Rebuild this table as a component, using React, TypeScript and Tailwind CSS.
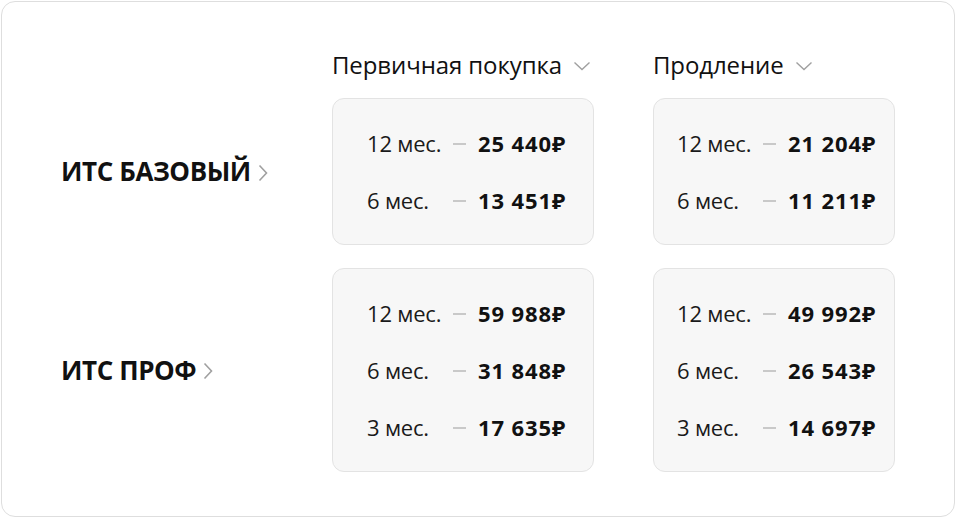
import React from "react";

const Dash = () => <div className="h-[2px] w-[13px] bg-[#c9c9c9]" />;

const HeadChevron = () => (
  <svg width="18" height="10" viewBox="0 0 18 10" className="ml-[11px] mt-[3px]">
    <path d="M1.5 1.5 L9 8.5 L16.5 1.5" fill="none" stroke="#a0a0a0" strokeWidth="1.4" />
  </svg>
);

const SideChevron = () => (
  <svg width="10" height="18" viewBox="0 0 10 18" className="ml-[7px] mt-[2px]">
    <path d="M1.5 1.5 L8.5 9 L1.5 16.5" fill="none" stroke="#a0a0a0" strokeWidth="1.6" />
  </svg>
);

type Row = [string, string];

const Card = ({ rows, pl }: { rows: Row[]; pl: string }) => (
  <div className={`rounded-[12px] border border-[#e3e3e3] bg-[#f7f7f7] pt-[16px] pb-[15px] ${pl}`}>
    {rows.map(([m, p]) => (
      <div key={m} className="flex h-[57px] items-center">
        <span className="w-[86px] text-[22px] tracking-[-0.2px] text-[#1a1a1a]">{m}</span>
        <Dash />
        <span className="ml-[12px] text-[22px] font-bold tracking-[0.9px] text-[#111]">{p}</span>
      </div>
    ))}
  </div>
);

export default function App() {
  return (
    <div className="h-[518px] w-[956px] bg-white p-px" style={{ fontFamily: '"Open Sans", "Noto Sans", sans-serif' }}>
      <div className="h-full w-full rounded-[14px] border border-[#dedede] pl-[59px] pt-[44px]">
        <div className="grid grid-cols-[212px_262px_242px] gap-x-[59px]">
          <div />
          <div className="flex h-[37px] items-center text-[24px] tracking-[-0.1px] text-[#111]">
            Первичная покупка
            <HeadChevron />
          </div>
          <div className="flex h-[37px] items-center text-[24px] tracking-[-0.1px] text-[#111]">
            Продление
            <HeadChevron />
          </div>
        </div>
        <div className="mt-[15px] grid grid-cols-[212px_262px_242px] gap-x-[59px] gap-y-[23px]">
          <div className="flex items-center text-[26px] font-bold tracking-[-0.4px] text-[#111]">
            ИТС БАЗОВЫЙ
            <SideChevron />
          </div>
          <Card pl="pl-[34px]" rows={[["12 мес.", "25 440₽"], ["6 мес.", "13 451₽"]]} />
          <Card pl="pl-[23px]" rows={[["12 мес.", "21 204₽"], ["6 мес.", "11 211₽"]]} />
          <div className="flex items-center text-[26px] font-bold tracking-[-0.4px] text-[#111]">
            ИТС ПРОФ
            <SideChevron />
          </div>
          <Card pl="pl-[34px]" rows={[["12 мес.", "59 988₽"], ["6 мес.", "31 848₽"], ["3 мес.", "17 635₽"]]} />
          <Card pl="pl-[23px]" rows={[["12 мес.", "49 992₽"], ["6 мес.", "26 543₽"], ["3 мес.", "14 697₽"]]} />
        </div>
      </div>
    </div>
  );
}
